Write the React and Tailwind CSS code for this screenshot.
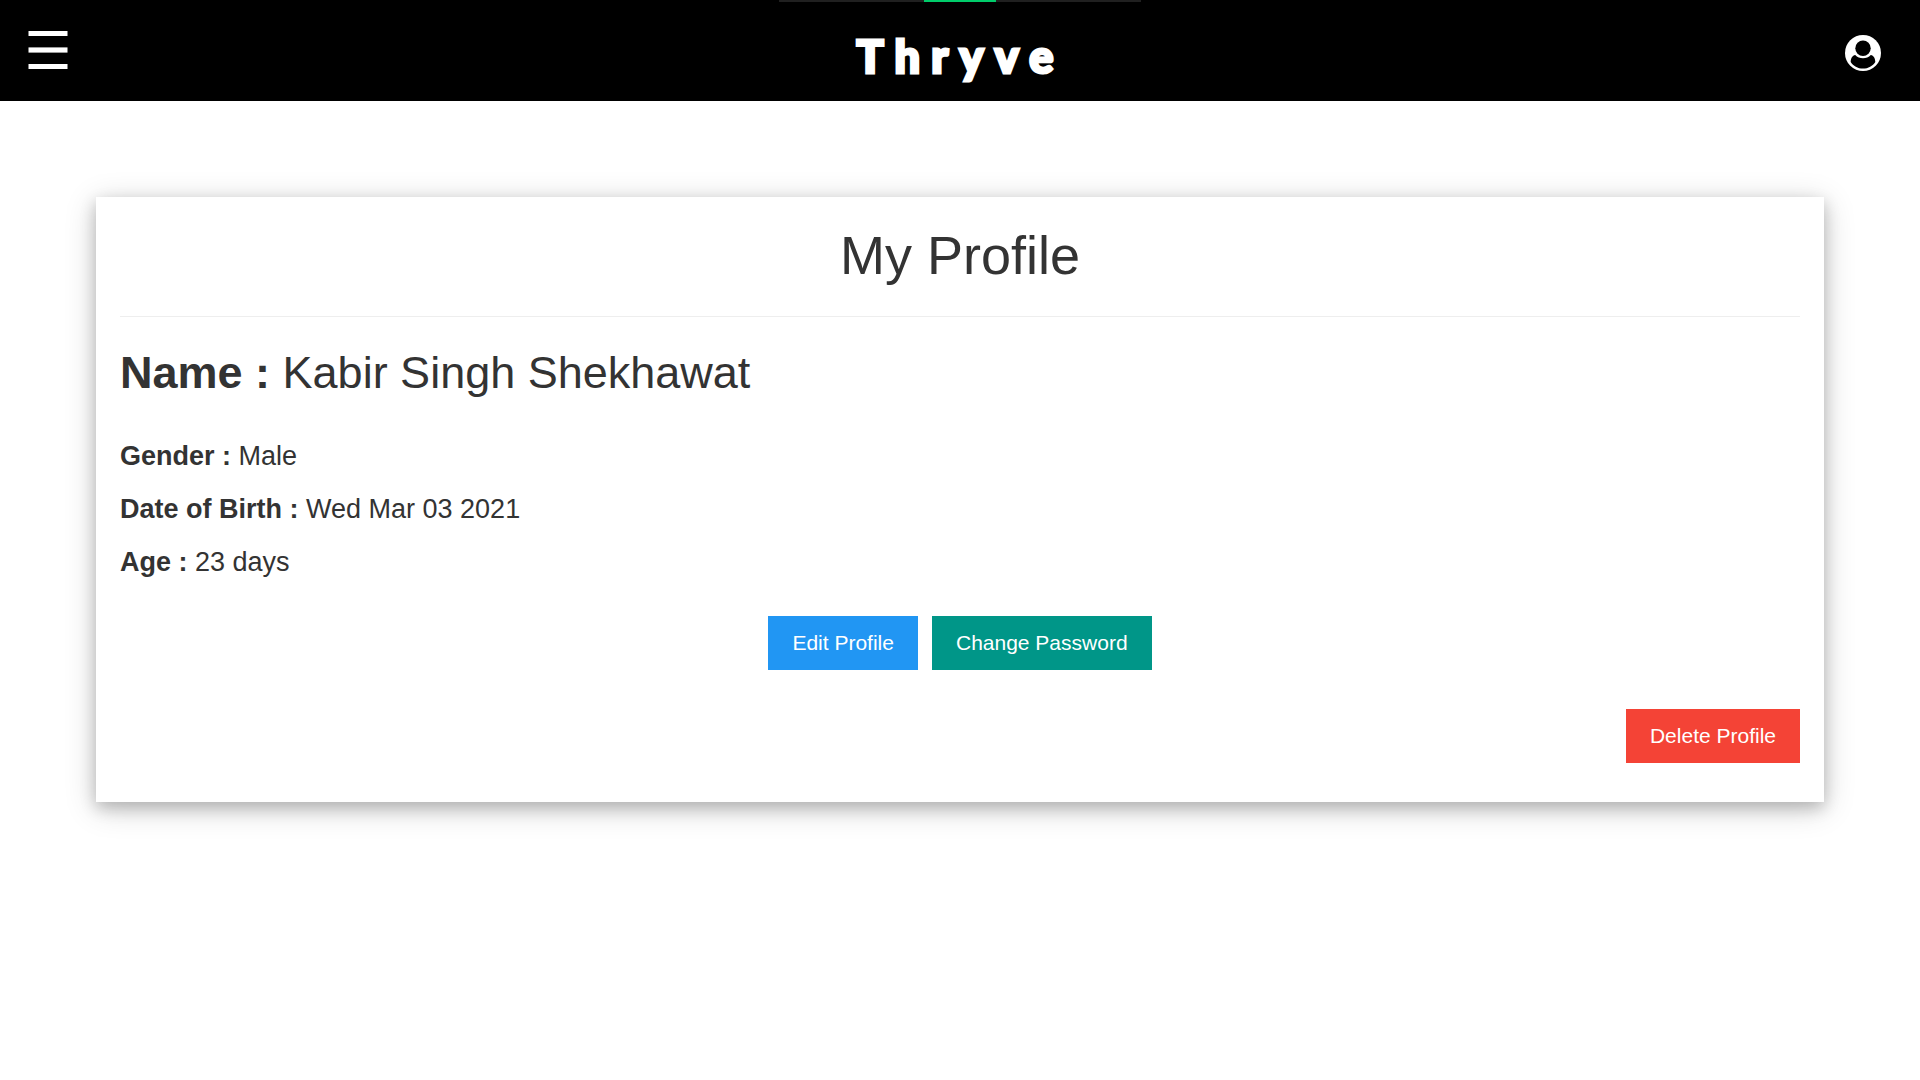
function MenuIcon() {
  return (
    <svg viewBox="0 0 40 38" className="h-[38px] w-10" fill="#fff" aria-hidden="true">
      <rect x="0.5" y="0" width="39" height="5" />
      <rect x="0.5" y="16.4" width="39" height="5.2" />
      <rect x="0.5" y="33" width="39" height="5" />
    </svg>
  );
}

function UserIcon() {
  return (
    <svg viewBox="0 0 36 36" className="size-9" aria-hidden="true">
      <circle cx="18" cy="18" r="18" fill="#fff" />
      <path
        d="M10.2 20C7.4 20.6 5.7 23.4 5.7 27C8.2 31 12.8 33.6 18 33.6S27.8 31 30.3 27C30.3 23.4 28.6 20.6 25.800 20C23.800 22.200 21 23.200 18 23.200S12.200 22.200 10.200 20Z"
        fill="#000"
      />
      <circle cx="18" cy="13.300" r="7.700" fill="#000" />
    </svg>
  );
}

function Detail({ label, value }) {
  return (
    <p className="text-[27px] leading-[30px]">
      <b>{label} :</b> {value}
    </p>
  );
}

function Action({ className, children }) {
  return (
    <button type="button" className={`px-6 py-3 text-[21px] leading-[30px] text-white ${className}`}>
      {children}
    </button>
  );
}

export default function App() {
  return (
    <div className="min-h-screen bg-white font-['Liberation_Sans',Arial,sans-serif] text-[#333]">
      <header className="relative grid grid-cols-3 items-center bg-black pt-1 pr-[39px] pl-7 text-white">
        <div className="absolute top-0 left-1/2 h-0.5 w-[362px] -translate-x-1/2 bg-[#202020]">
          <div className="mx-auto h-full w-[72px] bg-[#00cc6a]" />
        </div>
        <button type="button" aria-label="Open menu" className="justify-self-start pb-1.5">
          <MenuIcon />
        </button>
        <a
          href="#"
          className="justify-self-center pt-6 pb-4 pl-3 font-['Lato',sans-serif] text-[45px] leading-[57px] font-black tracking-[0.25em] [-webkit-text-stroke:3px_#fff] [stroke-linejoin:round]"
        >
          Thryve
        </a>
        <button type="button" aria-label="Account" className="justify-self-end">
          <UserIcon />
        </button>
      </header>

      <main className="mx-[5%] mt-24 bg-white px-6 pb-[39px] shadow-[0_6px_15px_rgba(0,0,0,0.2),0_6px_30px_rgba(0,0,0,0.19)]">
        <h1 className="pt-7 pb-[31px] text-center text-[54px] leading-[60px]">My Profile</h1>
        <hr className="border-[#eee]" />
        <h2 className="pt-[31px] pb-[43px] text-[45px] leading-[50px]">
          <b>Name :</b> Kabir Singh Shekhawat
        </h2>
        <div className="flex flex-col gap-[23px]">
          <Detail label="Gender" value="Male" />
          <Detail label="Date of Birth" value="Wed Mar 03 2021" />
          <Detail label="Age" value="23 days" />
        </div>
        <div className="mt-[39px] flex justify-center gap-3.5">
          <Action className="bg-[#2196f3]">Edit Profile</Action>
          <Action className="bg-[#009688]">Change Password</Action>
        </div>
        <div className="mt-[39px] flex justify-end">
          <Action className="bg-[#f44336]">Delete Profile</Action>
        </div>
      </main>
    </div>
  );
}
